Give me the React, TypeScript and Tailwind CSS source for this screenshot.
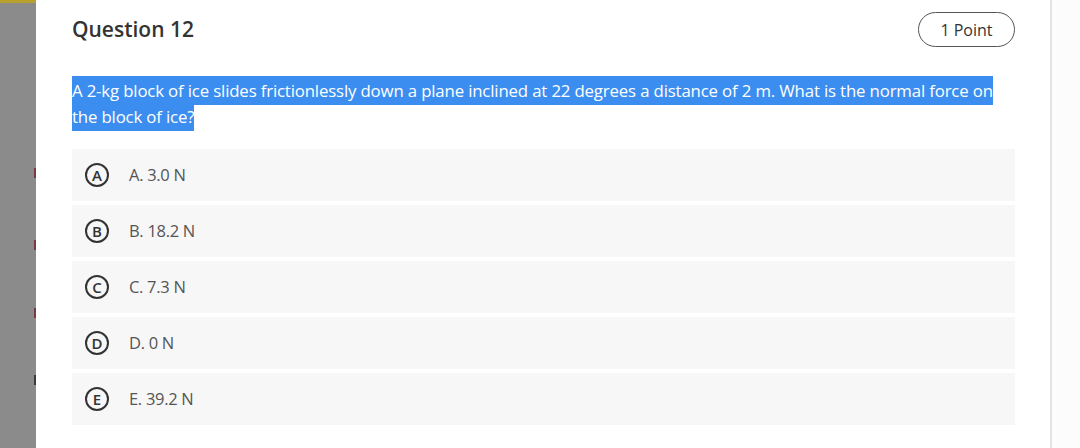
export default function App() {
  const options = [
    { key: "A", text: "A. 3.0 N" },
    { key: "B", text: "B. 18.2 N" },
    { key: "C", text: "C. 7.3 N" },
    { key: "D", text: "D. 0 N" },
    { key: "E", text: "E. 39.2 N" },
  ];

  return (
    <div className="w-[1080px] h-[448px] flex overflow-hidden bg-white font-['Open_Sans',sans-serif]">
      {/* left rail */}
      <div className="relative w-[36px] shrink-0 bg-[#8b8b8b]">
        <div className="h-[3px] bg-[#b9a12e]" />
        <div className="absolute right-0 top-[168px] w-[2px] h-[10px] bg-[#7a3a44]" />
        <div className="absolute right-0 top-[240px] w-[2px] h-[10px] bg-[#7a3a44]" />
        <div className="absolute right-0 top-[308px] w-[2px] h-[10px] bg-[#7a3a44]" />
        <div className="absolute right-0 top-[375px] w-[2px] h-[10px] bg-[#3a3a3a]" />
      </div>

      {/* question card */}
      <div className="w-[1016px] shrink-0 border-r-2 border-[#e4e4e4] pl-[36px] pr-[35px] pt-[12px]">
        <div className="flex items-center justify-between h-[35px]">
          <h2 className="text-[21px] font-semibold text-[#333]">Question 12</h2>
          <span className="w-[97px] h-[35px] flex items-center justify-center rounded-full border-[1.5px] border-[#555] text-[16px] font-medium text-[#333]">
            1 Point
          </span>
        </div>

        <p className="mt-[31px] text-[16.8px] leading-[26px] tracking-[-0.15px] text-white">
          <span className="bg-[#3b8ef0] py-[3px] box-decoration-clone">
            A 2-kg block of ice slides frictionlessly down a plane inclined at 22 degrees a distance of 2 m. What is the normal force on the block of ice?
          </span>
        </p>

        <div className="mt-[19px] flex flex-col gap-[4px]">
          {options.map((o) => (
            <div key={o.key} className="h-[52px] bg-[#f7f7f7] flex items-center pl-[13px] gap-[20px]">
              <span className="w-[24px] h-[24px] rounded-full border-2 border-[#333] flex items-center justify-center text-[15px] font-semibold text-[#333]">
                {o.key}
              </span>
              <span className="text-[16.5px] tracking-[-0.3px] text-[#555]">{o.text}</span>
            </div>
          ))}
        </div>
      </div>

      {/* right rail */}
      <div className="flex-1 bg-[#fcfcfc]" />
    </div>
  );
}
